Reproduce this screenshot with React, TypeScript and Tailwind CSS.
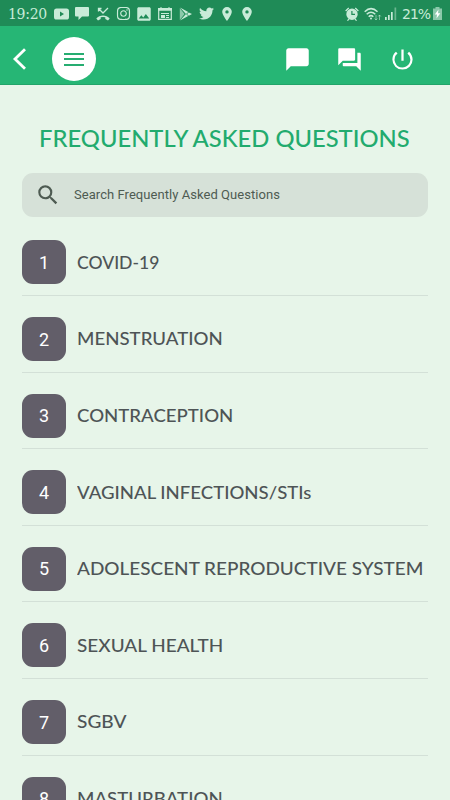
import React from "react";
import { MdChatBubble, MdForum, MdPowerSettingsNew, MdSearch, MdImage } from "react-icons/md";
import { FaTwitter, FaInstagram } from "react-icons/fa";

type Topic = { label: string; stretch: string };

const topics: Topic[] = [
  { label: "COVID-19", stretch: "scale-x-[0.975]" },
  { label: "MENSTRUATION", stretch: "scale-x-[1.036]" },
  { label: "CONTRACEPTION", stretch: "scale-x-[1.034]" },
  { label: "VAGINAL INFECTIONS/STIs", stretch: "scale-x-[1.032]" },
  { label: "ADOLESCENT REPRODUCTIVE SYSTEM", stretch: "scale-x-[1.053]" },
  { label: "SEXUAL HEALTH", stretch: "scale-x-[1.053]" },
  { label: "SGBV", stretch: "scale-x-[1.06]" },
  { label: "MASTURBATION", stretch: "scale-x-[1.036]" },
];

function Pin() {
  return (
    <svg className="h-[14px] w-[10px]" viewBox="0 0 10 14" fill="currentColor">
      <path fillRule="evenodd" d="M5 0a4.8 4.8 0 0 0-4.8 4.8C.2 8 5 14 5 14s4.8-6 4.8-9.200A4.800 4.800 0 0 0 5 0zm0 3.200a1.700 1.700 0 1 1 0 3.400 1.700 1.700 0 0 1 0-3.400z" />
    </svg>
  );
}

function StatusBar() {
  return (
    <div className="flex h-[26px] shrink-0 items-center justify-between bg-[#1f8b57] pt-px pr-[8px] pl-[8px] text-[#c8ebd8]">
      <div className="flex items-center">
        <span className="w-[46px] font-['DejaVu_Serif','Liberation_Serif',serif] text-[14px] leading-none tracking-[-0.3px]">19:20</span>
        <svg className="h-[12px] w-[15px]" viewBox="0 0 15 12" fill="currentColor">
          <path fillRule="evenodd" d="M2.500.4h10Q15 .4 15 3v6q0 2.600-2.500 2.600h-10Q0 11.600 0 9V3Q0 .4 2.500.4zM6 3.500v5L10 6z" />
        </svg>
        <svg className="ml-[6px] h-[13px] w-[14px]" viewBox="0 0 14 13" fill="currentColor">
          <path d="M1 0h12q1 0 1 1v7.500q0 1-1 1H7L3.500 13V9.500H1q-1 0-1-1V1q0-1 1-1z" />
        </svg>
        <svg className="ml-[7px] h-[14px] w-[14px]" viewBox="0 0 14 14" fill="none" stroke="currentColor">
          <path d="M2.500 4.500V1.500H5.500M3 2l4 4 5-5" strokeWidth="1.300" />
          <path d="M.3 11.500C3.500 7.500 10.500 7.500 13.700 11.500l-1.700 2-2.700-1.500V10.300Q7 9.500 4.700 10.300V12L2 13.500z" fill="currentColor" stroke="none" />
        </svg>
        <FaInstagram className="ml-[6px]" size={15} />
        <MdImage className="ml-[4px]" size={18} />
        <svg className="ml-[5px] h-[13px] w-[14px]" viewBox="0 0 14 13" fill="none" stroke="currentColor">
          <path d="M.7 3v9.300h12.600V3z" strokeWidth="1.200" />
          <path d="M0 1h14v2.500H0zM3 6h8v1H3zM3 8h4v3H3zM8 8h3v1H8zM8 10h3v1H8z" fill="currentColor" stroke="none" />
          <path d="M3 0v2M11 0v2" />
        </svg>
        <svg className="ml-[7px] h-[14px] w-[13px]" viewBox="0 0 13 14" fill="currentColor">
          <path d="M.8 1v12L5.500 7z" opacity=".65" />
          <path d="M1 .6l8.200 4.500L7 7zM1 13.400l8.200-4.500L7 7zM9.800 5.400L13 7l-3.200 1.700L8 7z" />
        </svg>
        <FaTwitter className="ml-[7px]" size={15} />
        <span className="ml-[7.500px] flex"><Pin /></span>
        <span className="ml-[10.500px] flex"><Pin /></span>
      </div>
      <div className="flex items-center">
        <svg className="h-[14px] w-[14px]" viewBox="0 0 14 14" fill="currentColor">
          <path fillRule="evenodd" d="M7 1.500a5.700 5.700 0 1 1 0 11.400 5.700 5.700 0 0 1 0-11.400zM6.300 4v4H10V6.800H7.500V4z" />
          <path d="M.2 3.500L3.300.6l.9 1L1.100 4.500zM13.800 3.500L10.700.6l-.9 1 3.100 2.900zM2 13.500l1.500-2 1 .8L3 14zM12 13.500l-1.500-2-1 .8L11 14z" />
        </svg>
        <svg className="ml-[5px] h-[14px] w-[18px]" viewBox="0 0 18 14" fill="none" stroke="currentColor" strokeWidth="1.500">
          <path d="M.7 4.700Q7 -1.500 13.500 4.700M2.700 7.300Q7 3.200 11.300 7.300M4.700 9.700Q7 7.500 9.300 9.700" />
          <circle cx="7" cy="11.500" r="1" fill="currentColor" stroke="none" />
          <path d="M12 8v5M10.700 11.500L12 13l1.300-1.500M15.500 13V8M14.200 9.500L15.500 8l1.300 1.500" strokeWidth=".8" opacity=".7" />
        </svg>
        <svg className="ml-[3px] h-[13px] w-[12px]" viewBox="0 0 12 13" fill="currentColor">
          <path d="M0 10h1.700v3H0zM3 8h1.700v5H3zM6 5h1.700v8H6z" />
          <path d="M9.500.5h1.700V13H9.500z" opacity=".45" />
        </svg>
        <span className="ml-[5px] w-[30px] font-['DejaVu_Sans','Liberation_Sans',sans-serif] text-[14px] leading-none tracking-[-1px]">21%</span>
        <svg className="ml-px h-[13px] w-[9px]" viewBox="0 0 9 13" fill="currentColor">
          <path d="M2.500 0h4v1.500H9V13H0V1.500h2.500z" opacity=".65" />
          <path d="M5.500 2.500L1.800 7.500H4L3.500 11.500 7.300 6.300H5z" className="text-white" />
        </svg>
      </div>
    </div>
  );
}

function Header() {
  return (
    <header className="flex h-[59px] shrink-0 items-center border-b border-[#22a469] bg-[#26b675] pt-[8px] pr-[34.500px] pl-[12px] text-white">
      <svg className="h-[24px] w-[15px]" viewBox="0 0 15 24" fill="none" stroke="currentColor" strokeWidth="2.800">
        <path d="M13 2.300L3 12l10 9.700" />
      </svg>
      <button className="ml-[25px] flex size-[44px] items-center justify-center rounded-full bg-white">
        <span className="flex w-[20px] flex-col gap-[3.500px]">
          <span className="h-[2px] bg-[#26ad71]" />
          <span className="h-[2px] bg-[#26ad71]" />
          <span className="h-[2px] bg-[#26ad71]" />
        </span>
      </button>
      <div className="ml-auto flex items-center gap-[25.500px]">
        <MdChatBubble size={27} />
        <MdForum size={27} />
        <MdPowerSettingsNew size={27} />
      </div>
    </header>
  );
}

export default function App() {
  return (
    <div className="flex h-[800px] w-[450px] flex-col overflow-hidden bg-[#e7f5e9] font-['Lato','Open_Sans',sans-serif]">
      <StatusBar />
      <Header />
      <main className="flex flex-col px-[22px] pt-[38px]">
        <h1 className="flex h-[30px] items-center justify-center pr-[2px] text-[23px] font-medium leading-none whitespace-nowrap text-[#22ab6e]">
          <span className="inline-block scale-x-[1.033]">FREQUENTLY ASKED QUESTIONS</span>
        </h1>
        <label className="mt-[19.700px] flex h-[44px] items-center rounded-[11px] bg-[#d6e1d8] pl-[13px] text-[#4e5b52]">
          <MdSearch size={26} />
          <span className="ml-[13px] font-['Roboto',sans-serif] text-[13px] tracking-[0.05px]">Search Frequently Asked Questions</span>
        </label>
        <ol className="flex flex-col pt-[2.700px]">
          {topics.map((topic, i) => (
            <li key={topic.label} className="flex h-[76.600px] shrink-0 items-center border-b border-[#d3e0d7] pt-[10.600px]">
              <span className="flex size-[44px] shrink-0 items-center justify-center rounded-[11px] bg-[#625e69] font-['Roboto',sans-serif] text-[18px] text-white">{i + 1}</span>
              <span className={`ml-[10.500px] inline-block origin-left pb-[1.500px] text-[18px] font-medium leading-none whitespace-nowrap text-[#4e5456] ${topic.stretch}`}>{topic.label}</span>
            </li>
          ))}
        </ol>
      </main>
    </div>
  );
}
